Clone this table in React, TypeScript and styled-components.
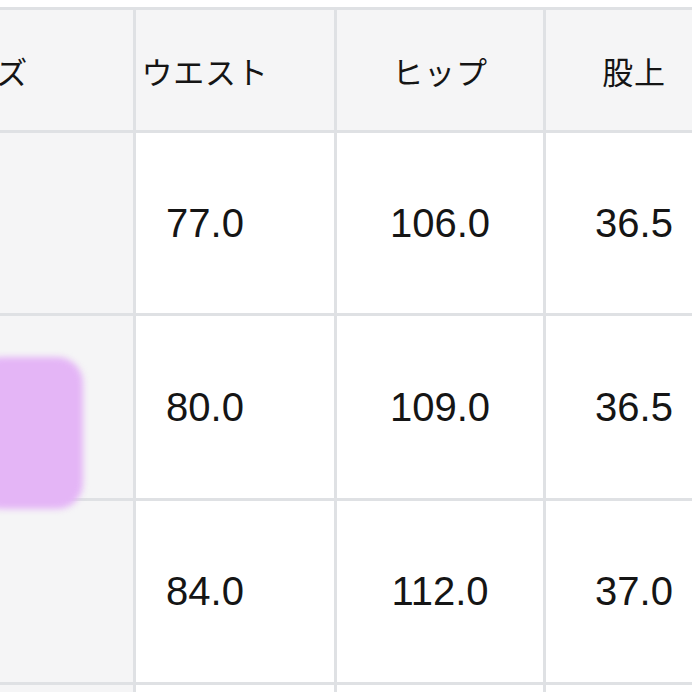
import React from "react";
import styled, { createGlobalStyle } from "styled-components";

const Global = createGlobalStyle`
  html, body { margin: 0; padding: 0; background: #ffffff; }
  body { font-family: "Liberation Sans", "Noto Sans CJK JP", sans-serif; }
`;

const Viewport = styled.div`
  position: relative;
  width: 692px;
  height: 692px;
  overflow: hidden;
  padding-top: 7px;
  box-sizing: border-box;
  background: #ffffff;
`;

const Grid = styled.div`
  display: grid;
  grid-template-columns: 133px 198px 206px 176px;
  grid-template-rows: 120px 180px 182px 181px 40px;
  gap: 3px;
  padding-top: 3px;
  width: 722px;
  background: #dfe1e4;
`;

const Cell = styled.div<{ $head?: boolean; $side?: boolean; $shift?: number }>`
  display: flex;
  align-items: center;
  justify-content: ${(p) => (p.$side ? "flex-end" : "center")};
  padding-right: ${(p) => (p.$shift ? `${p.$shift}px` : "0")};
  white-space: nowrap;
  overflow: visible;
  background: ${(p) => (p.$head || p.$side ? "#f5f5f6" : "#ffffff")};
  color: #151515;
  font-family: ${(p) =>
    p.$head
      ? `"Noto Sans CJK JP", "Noto Sans", sans-serif`
      : `"Liberation Sans", Arial, sans-serif`};
  font-size: ${(p) => (p.$head ? "31px" : "40px")};
  font-weight: 400;
  letter-spacing: ${(p) => (p.$head ? "0.8px" : "0")};
`;

const Blur = styled.div`
  position: absolute;
  left: -24px;
  top: 357px;
  width: 107px;
  height: 152px;
  border-radius: 26px;
  background: #e4b5f6;
  filter: blur(3px);
`;

const headers = ["サイズ", "ウエスト", "ヒップ", "股上"];
const rows = [
  ["", "77.0", "106.0", "36.5"],
  ["", "80.0", "109.0", "36.5"],
  ["", "84.0", "112.0", "37.0"],
  ["", "", "", ""],
];

const shifts = [105, 60, 0, 0];

export default function App() {
  return (
    <>
      <Global />
      <Viewport>
        <Grid>
          {headers.map((h, i) => (
            <Cell key={`h${i}`} $head $side={i === 0} $shift={shifts[i]}>
              {h}
            </Cell>
          ))}
          {rows.map((r, ri) =>
            r.map((v, ci) => (
              <Cell key={`${ri}-${ci}`} $side={ci === 0} $shift={ci === 0 ? 0 : shifts[ci]}>
                {v}
              </Cell>
            ))
          )}
        </Grid>
        <Blur />
      </Viewport>
    </>
  );
}
